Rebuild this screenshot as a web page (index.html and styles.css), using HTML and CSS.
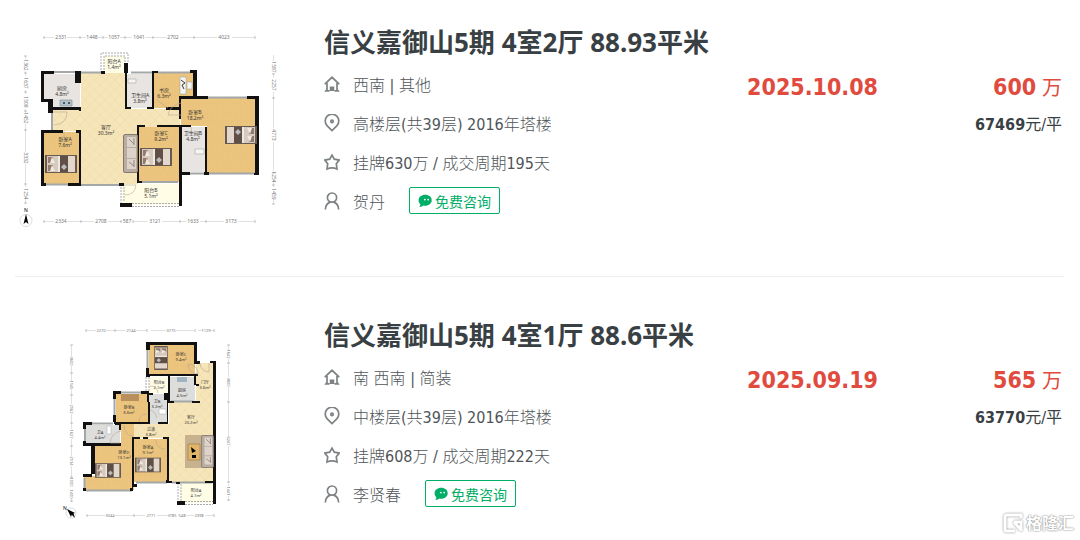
FILE: index.html
```html
<!DOCTYPE html>
<html lang="zh-CN">
<head>
  <meta charset="UTF-8">
  <meta name="viewport" content="width=device-width, initial-scale=1">
  <title>信义嘉御山5期 成交记录</title>
  <link rel="stylesheet" href="styles.css">
</head>
<body>

<!-- shared icons and floor plan parts -->
<svg class="defs" width="0" height="0" aria-hidden="true">
  <defs>
    <symbol id="icon-home" viewBox="0 0 16 16">
      <path d="M.8 8.200 8 1.300l7.200 6.900M3 7v6.500l-1 1.300h3.500M13 7v6.500l1 1.300h-3.500M6.600 15v-4.500M9.400 15v-4.500M8 15v-4.500" />
    </symbol>
    <symbol id="icon-pin" viewBox="0 0 16 18">
      <path d="M8 16.600 3.200 11.800a6.800 6.800 0 1 1 9.600 0z" />
      <circle cx="8" cy="7.400" r="1.200" />
    </symbol>
    <symbol id="icon-star" viewBox="0 0 16 16">
      <path d="m8 1.200 2.300 4 5 .9-3 3.700.7 5.200Q8 12.800 3 15l.7-5.200-3-3.700 5-.9z" />
    </symbol>
    <symbol id="icon-user" viewBox="0 0 16 18">
      <circle cx="8" cy="5.600" r="4.600" />
      <path d="M1.300 17.500c.3-4 2.400-6.600 5-7.400M14.700 17.500c-.3-4-2.400-6.600-5-7.400" />
    </symbol>
    <symbol id="icon-chat" viewBox="0 0 14 14">
      <path d="M7.200.8c3.700 0 6.500 2.300 6.500 5.400s-2.800 5.500-6.500 5.500c-.6 0-1.200-.1-1.800-.2-1 .9-2.500 1.300-4.200 1.200.8-.7 1.200-1.500 1.200-2.400C1.200 9.300.6 7.900.6 6.200.6 3.100 3.500.8 7.200.8z" />
      <circle class="eye" cx="6.800" cy="5.600" r=".9" />
      <circle class="eye" cx="10.200" cy="5.600" r=".9" />
    </symbol>
    <symbol id="bed" viewBox="0 0 32 18">
      <path fill="#675a50" d="M0 0h32v18H0z" />
      <path fill="#d6c9bd" d="M2 1h12v16H2z" />
      <path fill="#927b6c" d="M3 2h5v6H3zm0 8h5v6H3z" />
      <path fill="#f0e9e1" d="m7 2 3 6H5zm0 8 3 6H5zM13 1h2v16h-2z" />
      <path fill="#5f4f47" d="M15 1h8v16h-8z" />
      <path fill="#e2d7ca" d="M23 1h7v16h-7z" />
      <path fill="#bbb" d="m16 12 3-3 3 3-3 3z" />
    </symbol>
    <symbol id="sofa" viewBox="0 0 15 39">
      <rect width="14" height="38" x=".5" y=".5" rx="1.500" fill="#b9aca0" stroke="#83796f" />
      <path fill="#ddd3ca" d="M4 3h9v10H4zm0 11h9v10H4zm0 11h9v10H4z" />
      <path stroke="#94877b" fill="none" d="m6 5 5 5M11 4v7M6 28l5 4M11 26v7" />
    </symbol>
    <pattern id="wood" width="6" height="18" patternUnits="userSpaceOnUse">
      <path fill="#ecc680" d="M0 0h6v18H0z" />
      <path stroke="#e5bb72" stroke-width=".6" d="M1 0v18M4 0v18M1 6h3M4 13h3" />
    </pattern>
    <pattern id="tile" width="10" height="10" patternUnits="userSpaceOnUse">
      <path fill="#f5e5b9" d="M0 0h10v10H0z" />
      <path stroke="#f0dcaa" stroke-width=".7" d="m0 5 5-5 5 5-5 5z" fill="none" />
    </pattern>
  </defs>
</svg>

<main class="deal-list">

  <article class="deal">
    <svg class="plan" viewBox="15 23 280 212" role="img" aria-label="4室2厅户型图">
      <g class="dims">
        <path d="M44 37.500h10M67 37.500h19M98 37.500h10M120 37.500h12M145 37.500h22M180 37.500h37M232 37.500h23M44 221.500h10M68 221.500h26M108 221.500h14M133 221.500h15M162 221.500h24M200 221.500h24M239 221.500h16M25.500 56v3M25.500 71v5M25.500 90v4M25.500 109v4M25.500 124v28M25.500 164v23M25.500 200v4M273.500 55v6M273.500 73v5M273.500 92v36M273.500 142v29M273.500 183v4M273.500 200v4" />
        <path class="ticks" d="M44 36v3M80 36v3M103 36v3M125 36v3M153 36v3M194 36v3M255 36v3M44 220v3M81 220v3M121 220v3M133 220v3M180 220v3M206 220v3M255 220v3M24 56h3M24 73h3M24 92h3M24 111h3M24 130h3M24 184h3M24 203h3M272 74h3M272 98h3M272 173h3M272 185h3M272 204h3" />
      </g>
      <g class="dim-text">
        <text x="61" y="39">2331</text><text x="92" y="39">1448</text><text x="114" y="39">1057</text><text x="139" y="39">1641</text><text x="173" y="39">2702</text><text x="224" y="39">4023</text>
        <text x="61" y="223">2334</text><text x="101" y="223">2708</text><text x="127" y="223">587</text><text x="155" y="223">3121</text><text x="193" y="223">1633</text><text x="231" y="223">3173</text>
      </g>
      <g class="dim-text">
        <text transform="translate(24 65)rotate(90)">1362</text><text transform="translate(24 83)rotate(90)">1637</text><text transform="translate(24 102)rotate(90)">1508</text><text transform="translate(24 118)rotate(90)">1452</text><text transform="translate(24 158)rotate(90)">3332</text><text transform="translate(24 194)rotate(90)">1254</text>
        <text transform="translate(272 67)rotate(90)">1587</text><text transform="translate(272 85)rotate(90)">2257</text><text transform="translate(272 135)rotate(90)">4773</text><text transform="translate(272 177)rotate(90)">1254</text><text transform="translate(272 194)rotate(90)">1459</text>
      </g>
      <circle cx="26" cy="220.500" r="6" fill="none" stroke="#ddd" />
      <path d="m26 214 2.500 10-2.500-2-2.500 2z" />
      <text class="north" x="26" y="212">N</text>

      <!-- floors -->
      <path fill="url(#tile)" d="M81 73h45v36h54v18h-42v57H81v-53H53v-21h28z" />
      <path fill="#e7e4e1" d="M44 74h36v33H53v-7h-9zM127 74h25v34h-25zM182 127h23v45h-23z" />
      <path fill="#fffde6" d="M104 56h21v17h-21zM122 184h58v21h-58z" />
      <path fill="url(#wood)" d="M154 73h40v35h-40zM181 98h75v75h-49v-47h-26zM44 132h36v52H44zM139 127h41v55h-41z" />
      <!-- windows and dashed balconies -->
      <path class="window" d="M54 72h21M81 72.500h23M131 72.500h21M158 72.500h32M208 97.500h39M46 184.500h22M81 185h39M142 182h36M190 173.500h14M208 173.500h47M52 112v18" />
      <path class="dashed" d="M104 73V56h21v7M101 73V53h27v10M121 184v20M124 184v17M132 203.500h48M132 206.500h48" />
      <!-- walls -->
      <path class="wall" d="M41 71h13v3H44v25h9v8h28v4h-2v-1H53v3h-5v-11h-7zM75 71h6v12h-6zM124 63h4v10h-1v34h4v2h-6V73h-1zM147 107h7v2h-7zM152 71h6v2h-4v35h-2zM190 70h7v26h11v3h-27v20h-2V96h14V73h-3zM247 96h12v79h-5v-2h1V99h-8zM166 107h14v3h-14zM101 71h4v3h-4zM41 130h22v3H44v50h2v3h-5zM76 130h5v56H68v-3h11v-50h-3zM137 125h8v2h-6v54h3v2h-5zM157 125h23v2h-23zM179 125h12v2h-9v45h8v3h-8v31h-3zM205 127h2v45h2v3h-5v-3h1zM119 183h5v3h-5zM120 203h12v4h-12z" />
      <!-- doors -->
      <path class="door" d="M53 112h14q0 12-13 13M125 185h11q-1 10-11 10M64 131v13M168 108q-11-7-11-9M181 115h-13q2-10 13-12M191 127q0 8 8 8" />
      <!-- furniture -->
      <use href="#bed" x="45" y="155" width="32" height="18" />
      <use href="#bed" x="140" y="148" width="32" height="18" />
      <use href="#bed" x="-257" y="-148" width="32" height="26" transform="rotate(180)" />
      <use href="#sofa" x="123" y="134" width="15" height="39" />
      <path fill="#b4c3ca" stroke="#768990" stroke-width=".6" d="M60 100h12v6H60z" />
      <path d="M63 102h2v2h-2zM68 102h2v2h-2z" fill="#465b65" />
      <path fill="#f5f5f3" stroke="#999" stroke-width=".5" d="M180 77h6v17h-6zM187 82h5v7h-5zM128 79h8v4h-8zM195 149h9v5h-9z" />
      <path stroke="#333" fill="none" d="m181 80 4 3-3 2 2 4" />
      <g class="room">
        <text x="62" y="90">厨房</text><text x="62" y="95.500">4.8m²</text>
        <text x="114" y="63">阳台A</text><text x="114" y="69">1.4m²</text>
        <text x="140" y="97">卫生间A</text><text x="140" y="103">3.8m²</text>
        <text x="164" y="92">书房</text><text x="164" y="98">6.3m²</text>
        <text x="106" y="129">客厅</text><text x="106" y="135">30.3m²</text>
        <text x="195" y="114">卧室B</text><text x="195" y="120">18.2m²</text>
        <text x="65" y="141">卧室A</text><text x="65" y="147">7.6m²</text>
        <text x="161" y="135">卧室C</text><text x="161" y="141">9.2m²</text>
        <text x="193" y="135">卫生间B</text><text x="193" y="141">4.8m²</text>
        <text x="151" y="192">阳台B</text><text x="151" y="198">5.1m²</text>
      </g>
    </svg>

    <div class="info">
      <h2 class="title"><a href="#">信义嘉御山5期 4室2厅 88.93平米</a></h2>
      <ul class="facts">
        <li><svg class="icon"><use href="#icon-home" /></svg>西南 | 其他</li>
        <li><svg class="icon"><use href="#icon-pin" /></svg>高楼层(共39层) 2016年塔楼</li>
        <li><svg class="icon"><use href="#icon-star" /></svg>挂牌630万 / 成交周期195天</li>
        <li><svg class="icon"><use href="#icon-user" /></svg>贺丹
          <button class="consult" type="button"><svg class="chat"><use href="#icon-chat" /></svg>免费咨询</button>
        </li>
      </ul>
    </div>
    <time class="date" datetime="2025-10-08">2025.10.08</time>
    <div class="price">
      <p class="total"><strong>600</strong> 万</p>
      <p class="unit"><strong>67469</strong>元/平</p>
    </div>
  </article>

  <article class="deal">
    <svg class="plan" viewBox="15 316 280 212" role="img" aria-label="4室1厅户型图">
      <g class="dims">
        <path d="M86 330.500h10M106 330.500h20M136 330.500h11M151 330.500h15M176 330.500h18M198 330.500h5M210 330.500h4M87 515.500h18M115 515.500h30M157 515.500h13M186 515.500h8M205 515.500h9M71.500 345v12M71.500 366v15M71.500 390v14M71.500 414v15M71.500 439v18M71.500 466v12M71.500 498v4M228.500 345v5M228.500 359v18M228.500 387v49M228.500 446v40M228.500 496v5" />
        <path class="ticks" d="M86 329v3M115 329v3M147 329v3M195 329v3M214 329v3M87 514v3M134 514v3M169 514v3M214 514v3M70 345h3M70 373h3M70 395h3M70 423h3M70 446h3M70 477h3M70 501h3M227 345h3M227 363h3M227 402h3M227 482h3M227 500h3" />
      </g>
      <g class="dim-text small">
        <text x="101" y="332">2270</text><text x="131" y="332">2144</text><text x="171" y="332">3775</text><text x="206" y="332">1129</text>
        <text x="110" y="517">3044</text><text x="151" y="517">2771</text><text x="173" y="517">785</text><text x="182" y="517">548</text><text x="199" y="517">2398</text>
        <text transform="translate(70 361)rotate(90)">3600</text><text transform="translate(70 385)rotate(90)">1145</text><text transform="translate(70 409)rotate(90)">2162</text><text transform="translate(70 434)rotate(90)">1627</text><text transform="translate(70 461)rotate(90)">2114</text><text transform="translate(70 482)rotate(90)">1000</text><text transform="translate(70 494)rotate(90)">1400</text>
        <text transform="translate(227 354)rotate(90)">1642</text><text transform="translate(227 382)rotate(90)">3800</text><text transform="translate(227 441)rotate(90)">6247</text><text transform="translate(227 491)rotate(90)">1441</text>
      </g>
      <circle cx="71" cy="513" r="5" fill="none" stroke="#ddd" />
      <path d="m67 509 8 4-3 1-1 3z" />
      <path d="m70 513 5 5-2-6z" />
      <text class="north" x="65" y="510">N</text>

      <!-- floors -->
      <path fill="url(#tile)" d="M196 363h18v119h-45v-44h-35v-14h35v-22h27z" />
      <path fill="#dddddc" d="M169 377h26v25h-26zM149 394h19v30h-19zM86 425h34v19H86z" />
      <path fill="#fffde6" d="M149 377h19v16h-19zM180 483h34v20h-34z" />
      <path fill="url(#wood)" d="M149 345h46v29h-46zM116 394h32v28h-32zM121 424h13v66H84v-14h11v-30h26zM134 439h34v43h-34z" />
      <path class="window" d="M147.500 350v18M121 392.500h20M114.500 399v16M85 427v15M84.500 478v10M86 490.500h46M136 482.500h31M171 401.500h22M172 482.500h40M92 423.500h21" />
      <path class="dashed" d="M146 377v14M149 377v14M178 483v18M181 484v17M185 501.500h28M185 504.500h28" />
      <!-- walls -->
      <path class="wall" d="M146 342h51v19h3v3h-6v-19h-44v5h-4zM146 368h3v6h49v2h-48v1h-4zM210 361h6v143h-3V363h-3zM113 391h8v3h-5v5h-3zM141 391h8v11h-2v-8h-6zM113 415h3v7h32v-20h2v22h-36v-2h-1zM83 422h9v3h-6v4h-3zM115 422h6v8h-2v-5h-4zM83 441h3v2h35v3H95v28h-3v3h-9v-3h8v-28h-8zM132 437h8v2h-6v45h3v3h-4v4h-3v-3h2zM143 437h5v2h-5zM163 437h6v46h-3v-3h1v-41h-4zM168 376h2v25h4v2h-6zM149 393h4v2h-4zM164 393h4v31h-10v-2h9v-22h-3zM194 376h2v9h-2zM192 401h8v2h-8zM196 384h3v2h-3zM169 481h3v2h-3zM205 481h8v2h-8zM176 482h4v2h-4zM177 501h8v4h-8zM83 488h3v3h-3z" />
      <path class="door" d="M198 374q-10-1-10-10 10 1 10 10M209 363v9q-9-1-9-9M150 386q7 0 8 7M121 431q-10 2-11 12h10M124 425q0 11 9 11M156 440q1 9 9 9M139 422q0-8 8-8M150 410q5 1 7 8" />
      <!-- furniture -->
      <use href="#bed" x="346" y="-168" width="24" height="14" transform="rotate(90)" />
      <use href="#bed" x="95" y="463" width="26" height="15" />
      <use href="#bed" x="135" y="457" width="26" height="16" />
      <path fill="#b98f5b" d="M121 394h18v7h-18z" />
      <path fill="#c7b18f" d="M185 435h23v33h-23z" />
      <path fill="#e0b569" stroke="#a57b43" stroke-width=".7" d="M188 444h12v16h-12z" />
      <path d="m191 447 5 4-4 2zM192 455h4v3h-4z" />
      <use href="#sofa" x="201" y="435" width="13" height="33" />
      <path fill="#9fb5c4" d="M177 377h10v5h-10z" />
      <path fill="#fff" stroke="#aaa" stroke-width=".5" d="M107 426h4v8h-4zM159 409h7v5h-7z" />
      <g class="room small">
        <text x="181" y="356">卧室C</text><text x="181" y="361">9.4m²</text>
        <text x="159" y="384">阳台B</text><text x="159" y="389">2.1m²</text>
        <text x="182" y="392">厨房</text><text x="182" y="397">4.5m²</text>
        <text x="205" y="384">门厅</text><text x="205" y="389">3.6m²</text>
        <text x="129" y="409">卧室B</text><text x="129" y="414">6.6m²</text>
        <text x="157" y="403">卫B</text><text x="157" y="408">3.2m²</text>
        <text x="191" y="419">客厅</text><text x="191" y="424">20.2m²</text>
        <text x="100" y="434">卫A</text><text x="100" y="439">4.4m²</text>
        <text x="151" y="431">过道</text><text x="151" y="436">3.8m²</text>
        <text x="124" y="454">卧室D</text><text x="124" y="459">13.1m²</text>
        <text x="148" y="449">卧室A</text><text x="148" y="454">9.1m²</text>
        <text x="196" y="492">阳台A</text><text x="196" y="497">4.1m²</text>
      </g>
    </svg>

    <div class="info">
      <h2 class="title"><a href="#">信义嘉御山5期 4室1厅 88.6平米</a></h2>
      <ul class="facts">
        <li><svg class="icon"><use href="#icon-home" /></svg>南 西南 | 简装</li>
        <li><svg class="icon"><use href="#icon-pin" /></svg>中楼层(共39层) 2016年塔楼</li>
        <li><svg class="icon"><use href="#icon-star" /></svg>挂牌608万 / 成交周期222天</li>
        <li><svg class="icon"><use href="#icon-user" /></svg>李贤春
          <button class="consult" type="button"><svg class="chat"><use href="#icon-chat" /></svg>免费咨询</button>
        </li>
      </ul>
    </div>
    <time class="date" datetime="2025-09-19">2025.09.19</time>
    <div class="price">
      <p class="total"><strong>565</strong> 万</p>
      <p class="unit"><strong>63770</strong>元/平</p>
    </div>
  </article>

</main>

<div class="watermark">
  <svg viewBox="0 0 20 20" aria-hidden="true">
    <path d="M18 5V2H4Q2 2 2 4v12q0 2 2 2h8M18 18V9h-7M11 9l7 8" />
  </svg>
  <span>格隆汇</span>
</div>

</body>
</html>
```
FILE: styles.css
```css
* {
  box-sizing: border-box;
}

body {
  margin: 0;
  background: #fff;
  color: #394043;
  font-family: "Noto Sans", "Noto Sans CJK SC", sans-serif;
  font-size: 16px;
}

.defs {
  position: absolute;
}

.deal-list {
  padding: 0 16px 0 15px;
}

.deal {
  display: grid;
  grid-template-columns: 280px 1fr auto 184px;
  align-items: start;
  padding: 39px 2px 41px 0;
  border-bottom: 1px solid #eee;
}

.deal:first-child {
  padding-top: 23px;
}

.deal:last-child {
  padding-bottom: 0;
  border-bottom: none;
}

.plan {
  display: block;
  width: 100%;
}

/* floor plan drawing */
.dims path {
  stroke: #ccc;
  stroke-width: 0.6;
}

.dims .ticks {
  stroke: #999;
}

.wall {
  fill: #111;
}

.window {
  fill: none;
  stroke: #a3a7a8;
  stroke-width: 2;
}

.dashed {
  fill: none;
  stroke: #aaa;
  stroke-dasharray: 2 1;
}

.door {
  fill: none;
  stroke: #b5aa93;
  stroke-width: 0.6;
}

.dim-text,
.room,
.north {
  font-size: 5px;
  text-anchor: middle;
}

.dim-text {
  fill: #777;
}

.room {
  fill: #333;
}

.small {
  font-size: 4px;
}

/* listing text */
.info {
  padding-left: 29px;
}

.title {
  margin: 0 0 3px;
  font-size: 26px;
  line-height: 38px;
  font-weight: 700;
  white-space: nowrap;
}

.title a {
  color: inherit;
  text-decoration: none;
}

.facts {
  margin: 0;
  padding: 0;
  list-style: none;
  color: #505558;
  font-family: "DejaVu Sans Condensed", "Noto Sans CJK SC", sans-serif;
  font-weight: 300;
}

.facts li {
  display: flex;
  align-items: center;
  height: 39px;
  white-space: nowrap;
}

.icon {
  width: 16px;
  height: 18px;
  margin-right: 13px;
  fill: none;
  stroke: #7d8284;
  stroke-width: 1.7;
}

.consult {
  display: flex;
  align-items: center;
  gap: 3px;
  height: 27px;
  margin-left: 24px;
  padding: 0 8px;
  border: 1px solid #00ae66;
  border-radius: 2px;
  background: #fff;
  color: #00ae66;
  font-family: inherit;
  font-size: 14px;
  cursor: pointer;
}

.chat {
  width: 14px;
  height: 14px;
  fill: currentColor;
}

.eye {
  fill: #fff;
}

.date,
.total,
.unit {
  font-family: "DejaVu Sans Condensed", "Noto Sans CJK SC", sans-serif;
}

.date,
.total {
  padding-top: 47px;
  color: #e04b3e;
  font-size: 23px;
  line-height: 34px;
  font-weight: 700;
}

.price {
  text-align: right;
}

.total,
.unit {
  margin: 0;
}

.total {
  font-size: 20px;
  font-weight: 400;
}

.total strong {
  font-size: 23px;
}

.unit {
  padding-top: 8px;
  line-height: 24px;
}

/* site mark over the corner of the page */
.watermark {
  position: absolute;
  right: 6px;
  bottom: 6px;
  display: flex;
  align-items: center;
  gap: 3px;
  color: #fff;
  font-size: 16px;
  line-height: 22px;
  font-weight: 700;
  text-shadow: 0 0 2px #888, 0 0 1px #888;
}

.watermark svg {
  width: 20px;
  height: 20px;
  fill: none;
  stroke: #fff;
  stroke-width: 3;
  filter: drop-shadow(0 0 1px #888);
}
```
